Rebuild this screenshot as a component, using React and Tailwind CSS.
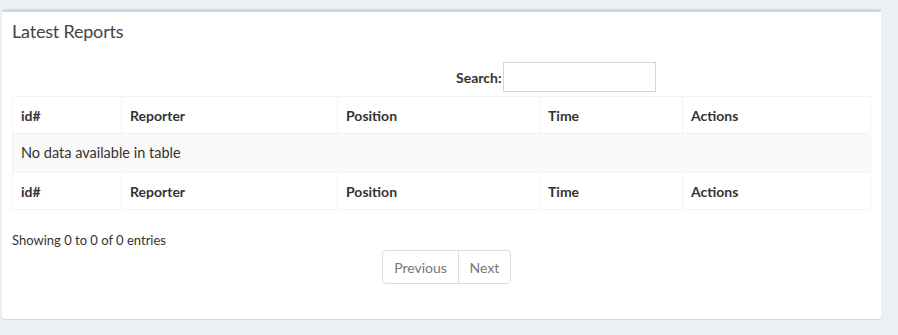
import React from "react";

const cols = [
  { label: "id#", w: "w-[109px]" },
  { label: "Reporter", w: "w-[216px]" },
  { label: "Position", w: "w-[202px]" },
  { label: "Time", w: "w-[143px]" },
  { label: "Actions", w: "w-[188px]" },
];

function HeadRow() {
  return (
    <tr className="h-[37px]">
      {cols.map((c) => (
        <th
          key={c.label}
          className={`${c.w} border border-[#f4f4f4] px-[8px] text-left font-bold text-[14px] text-[#333]`}
        >
          {c.label}
        </th>
      ))}
    </tr>
  );
}

export default function App() {
  return (
    <div
      className="w-[898px] h-[335px] bg-[#ecf0f5] pt-[9px] pl-[2px] pr-[17px] text-[#333]"
      style={{ fontFamily: "Lato, 'Noto Sans', sans-serif" }}
    >
      <div className="h-[310px] bg-white border-t-[3px] border-[#d2d6de] rounded-[3px] shadow-[0_1px_1px_rgba(0,0,0,0.1)]">
        <div className="px-[10px] pt-[7px] h-[40px]">
          <h3 className="text-[18px] leading-[24px] text-[#444] tracking-[-0.2px]">Latest Reports</h3>
        </div>
        <div className="px-[10px]">
          <div className="flex items-center h-[30px] mt-[10px] pl-[444px]">
            <label className="font-bold text-[14px] text-[#333]">Search:</label>
            <input className="ml-[1px] w-[153px] h-[30px] border border-[#d2d6de] outline-none" />
          </div>
          <table className="mt-[4px] border-collapse table-fixed w-[859px]">
            <thead>
              <HeadRow />
            </thead>
            <tbody>
              <tr className="h-[39px] bg-[#f9f9f9]">
                <td colSpan={5} className="border border-[#f4f4f4] px-[8px] text-[14.5px] text-[#333]">
                  No data available in table
                </td>
              </tr>
            </tbody>
            <tfoot>
              <HeadRow />
            </tfoot>
          </table>
          <div className="mt-[22px] text-[13px] leading-[16px] text-[#333]">Showing 0 to 0 of 0 entries</div>
          <div className="mt-[2px] flex pl-[370px]">
            <div className="flex h-[34px] border border-[#ddd] rounded-[4px] text-[14px] text-[#777]">
              <span className="w-[76px] flex items-center justify-center border-r border-[#ddd]">Previous</span>
              <span className="w-[51px] flex items-center justify-center">Next</span>
            </div>
          </div>
        </div>
      </div>
    </div>
  );
}
